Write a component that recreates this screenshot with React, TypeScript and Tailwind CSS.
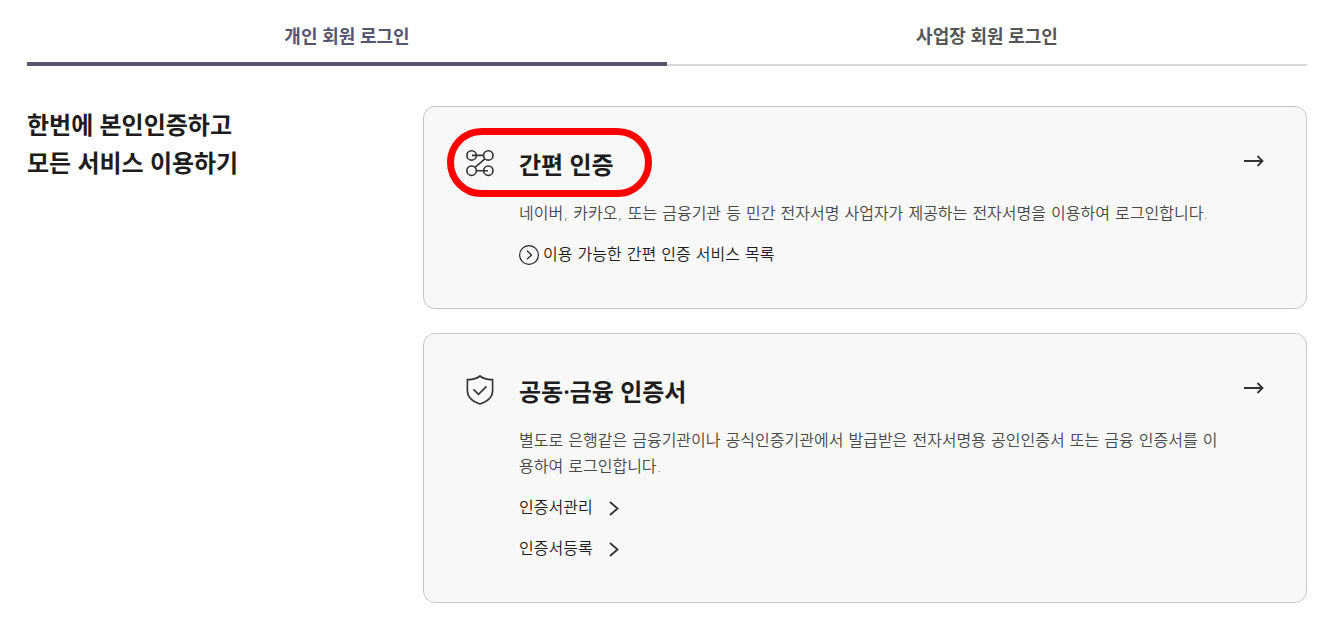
import { useState } from 'react';
import type { ReactNode } from 'react';
import clsx from 'clsx';

const tabs = ['개인 회원 로그인', '사업장 회원 로그인'];

function NodesIcon() {
  return (
    <svg className="w-7 h-7" viewBox="0 0 28 28" fill="none" stroke="#333" strokeWidth="1.6">
      <circle cx="5.6" cy="6.4" r="4.7" />
      <circle cx="22.3" cy="6.4" r="4.7" />
      <circle cx="5.6" cy="21.7" r="4.7" />
      <circle cx="22.3" cy="21.7" r="4.7" />
      <path d="M6 6.4h11.6M18.9 9.9 9 18.3M10.3 21.7H22" />
    </svg>
  );
}

function ShieldIcon() {
  return (
    <svg className="w-7 h-8" viewBox="0 0 28 32" fill="none" stroke="#333" strokeWidth="1.6">
      <path d="M14 2c-3.4 2.6-7.6 3.9-12.6 3.6v11.2c0 6.6 5.4 10.9 12.6 13.2 7.2-2.3 12.6-6.6 12.6-13.2V5.6C21.6 5.9 17.4 4.6 14 2Z" />
      <path d="m7.5 15.4 5 5 8-8" />
    </svg>
  );
}

function ArrowIcon() {
  return (
    <svg className="w-5 h-3" viewBox="0 0 20 12" fill="none" stroke="#333" strokeWidth="1.8">
      <path d="M0 6h18.5M13.5 1l5 5-5 5" />
    </svg>
  );
}

function ChevronIcon() {
  return (
    <svg className="w-3 h-4" viewBox="0 0 12 16" fill="none" stroke="#333" strokeWidth="1.8">
      <path d="m1 2 7.5 6.5L1 15" />
    </svg>
  );
}

function CircleChevronIcon() {
  return (
    <svg className="w-5 h-5" viewBox="0 0 20 20" fill="none" stroke="#222" strokeWidth="1.2">
      <circle cx="10" cy="10" r="9.4" />
      <path d="m8 5.8 4.5 4.2L8 14.2" />
    </svg>
  );
}

type LoginCardProps = {
  icon: ReactNode;
  title: string;
  description: string;
  highlighted?: boolean;
  children: ReactNode;
};

function LoginCard({ icon, title, description, highlighted, children }: LoginCardProps) {
  return (
    <section className="relative flex items-start rounded-xl border border-[#c6c6c6] bg-[#f8f8f8] px-[42px] py-10">
      {/* Highlight ring around the icon and title */}
      {highlighted && (
        <div className="absolute left-[23px] top-[21px] w-[205px] h-[69px] rounded-full border-[7px] border-[#ff0000] pointer-events-none" />
      )}
      <div className="flex h-8 w-7 shrink-0 items-center justify-center">{icon}</div>
      <div className="ml-[25px] min-w-0 flex-1 font-['DejaVu_Sans','Noto_Sans_CJK_KR',sans-serif]">
        <h3 className="font-['Noto_Sans','Noto_Sans_CJK_KR',sans-serif] text-2xl leading-9 font-semibold text-[#1d1d1d]">
          {title}
        </h3>
        <p className="mt-[18px] text-base leading-[26px] font-[350] text-[#484848]">{description}</p>
        {children}
      </div>
      <button type="button" aria-label={title} className="ml-6 mt-2 flex h-3 w-5 shrink-0 cursor-pointer items-center">
        <ArrowIcon />
      </button>
    </section>
  );
}

export default function App() {
  const [activeTab, setActiveTab] = useState(0);

  return (
    <main className="bg-white pt-2.5 pb-5 pl-[27px] pr-9 font-['Noto_Sans','Noto_Sans_CJK_KR',sans-serif]">
      {/* Tabs */}
      <div role="tablist" className="grid grid-cols-2 items-end">
        {tabs.map((tab, index) => (
          <button
            key={tab}
            type="button"
            role="tab"
            aria-selected={activeTab === index}
            onClick={() => setActiveTab(index)}
            className={clsx(
              'h-14 cursor-pointer text-lg font-semibold',
              activeTab === index
                ? 'border-b-4 border-[#55556f] pb-0 text-[#55556f]'
                : 'border-b-2 border-[#d8d8d8] pb-[2px] text-[#555]'
            )}
          >
            {tab}
          </button>
        ))}
      </div>

      <div className="mt-10 flex items-start">
        <h2 className="w-99 shrink-0 text-2xl leading-[38px] font-semibold text-[#1d1d1d]">
          한번에 본인인증하고
          <br />
          모든 서비스 이용하기
        </h2>

        <div className="flex min-w-0 flex-1 flex-col gap-6">
          <LoginCard
            icon={<NodesIcon />}
            title="간편 인증"
            description="네이버, 카카오, 또는 금융기관 등 민간 전자서명 사업자가 제공하는 전자서명을 이용하여 로그인합니다."
            highlighted
          >
            <a href="#services" className="mt-[15px] flex w-fit items-center gap-1 text-base leading-[26px] font-[350] text-[#1d1d1d]">
              <CircleChevronIcon />
              이용 가능한 간편 인증 서비스 목록
            </a>
          </LoginCard>

          <LoginCard
            icon={<ShieldIcon />}
            title="공동·금융 인증서"
            description="별도로 은행같은 금융기관이나 공식인증기관에서 발급받은 전자서명용 공인인증서 또는 금융 인증서를 이용하여 로그인합니다."
          >
            <a href="#manage" className="mt-[15px] flex w-fit items-center gap-4 text-base leading-[26px] font-[350] text-[#1d1d1d]">
              인증서관리
              <ChevronIcon />
            </a>
            <a href="#register" className="mt-[15px] flex w-fit items-center gap-4 text-base leading-[26px] font-[350] text-[#1d1d1d]">
              인증서등록
              <ChevronIcon />
            </a>
          </LoginCard>
        </div>
      </div>
    </main>
  );
}
